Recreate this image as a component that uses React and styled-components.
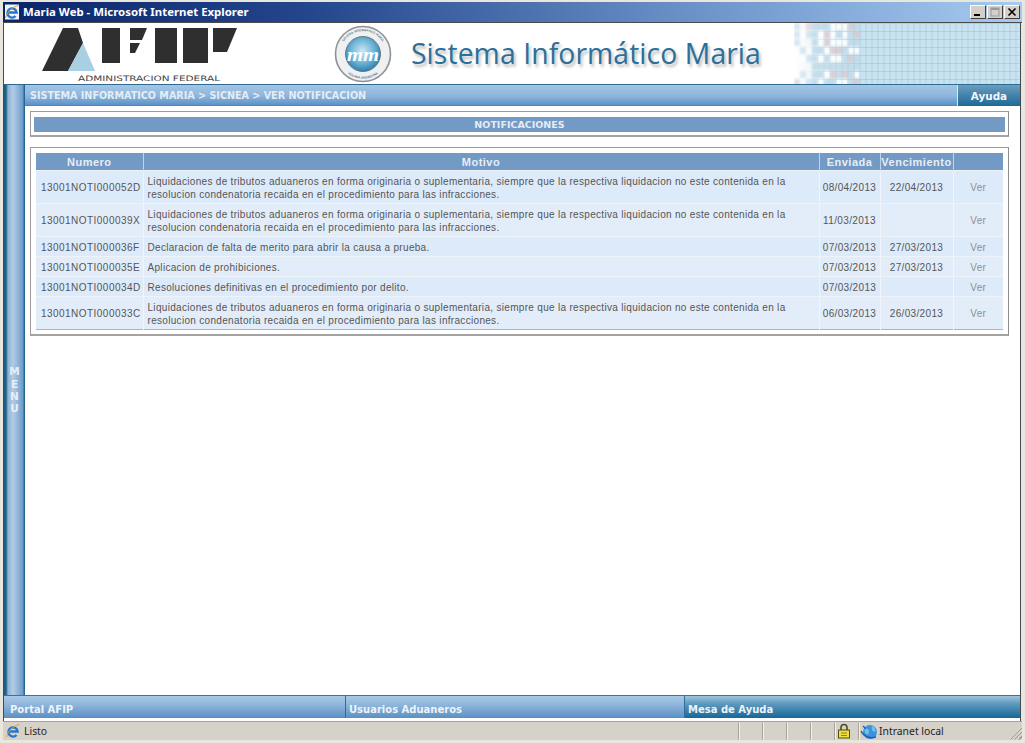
import React from "react";
import styled, { createGlobalStyle } from "styled-components";

const Global = createGlobalStyle`
  html, body { margin: 0; padding: 0; background: #fff; }
  * { box-sizing: border-box; }
`;

const Window = styled.div`
  width: 1025px; height: 743px; display: flex; flex-direction: column;
  background: #e9e6de; padding: 2px 3px 3px 3px; overflow: hidden;
  font-family: "Liberation Sans", Arial, sans-serif;
`;
const TitleBar = styled.div`
  height: 21px; flex: none; display: flex; align-items: center; padding: 0 2px 1px 1px;
  background: linear-gradient(90deg, #0a246a 0%, #24468c 30%, #6f97cc 70%, #a6caf0 100%);
  border-bottom: 1px solid #4a4a4a;
`;
const TitleText = styled.span`
  font: bold 11.4px "Noto Sans", sans-serif; color: #fff; margin-left: 3px; flex: 1; white-space: nowrap;
`;
const CaptionBtn = styled.button`
  width: 16px; height: 14px; padding: 0; margin-left: 1px; display: flex; align-items: center; justify-content: center;
  background: #d4d0c8; border: 1px solid; border-color: #fff #404040 #404040 #fff;
`;
const Page = styled.div`
  flex: 1; display: flex; flex-direction: column; min-height: 0; background: #fff;
  border-left: 1px solid #3f4a52; border-right: 1px solid #3f4a52; margin-right: 1px; padding-bottom: 3px;
`;
const Header = styled.div`
  height: 62px; flex: none; display: flex; align-items: stretch; background: #fff;
  border-bottom: 1px solid #2c6a92;
`;
const LogoSlot = styled.div`
  width: 322px; flex: none;
`;
const SealSlot = styled.div`
  width: 80px; flex: none; display: flex; align-items: center; justify-content: center; padding-right: 6px;
`;
const BrandTitle = styled.div`
  width: 388px; flex: none; padding-left: 5px; font: 28.3px/60px "Open Sans", sans-serif; color: #2b6f9b;
  text-shadow: 2px 3px 3px #bdbdbd; white-space: nowrap; letter-spacing: 0.1px;
`;
const Pattern = styled.div`
  flex: 1; overflow: hidden;
`;
const Body = styled.div`
  flex: 1; display: flex; min-height: 0;
`;
const MenuStrip = styled.div`
  width: 21px; flex: none; display: flex; flex-direction: column; align-items: center; justify-content: center;
  background: linear-gradient(90deg, #1d6086 0, #1d6086 2px, #8fb3d6 4px, #b4cce4 9px, #6d9ccb 19px, #2a6c96 20px, #1d6086 21px);
`;
const MenuLetter = styled.span`
  font: bold 10.5px/12.3px "DejaVu Sans", sans-serif; color: #e6eef7;
`;
const Main = styled.div`
  flex: 1; display: flex; flex-direction: column; min-width: 0; background: #fff;
`;
const NavBar = styled.div`
  height: 21px; flex: none; display: flex; align-items: stretch;
  background: linear-gradient(180deg, #a5c6e4 0, #8db5dc 11px, #5c92c6 20px, #3c7eaa 21px);
`;
const Crumbs = styled.div`
  flex: 1; padding-left: 5px; font: bold 9.6px/22px "DejaVu Sans", sans-serif; color: #e4edf6; white-space: nowrap;
`;
const AyudaLink = styled.div`
  width: 63px; flex: none; text-align: center; font: bold 10.4px/22px "DejaVu Sans", sans-serif; color: #f2f6fa;
  background: linear-gradient(180deg, #6b9dbf 0, #4d88ae 8px, #1c6a98 21px); border-left: 1px solid #dce6ef;
`;
const Content = styled.div`
  flex: 1; padding: 5px 11px 0 5px; display: flex; flex-direction: column; gap: 10px;
`;
const Panel = styled.div`
  border: 1px solid #9e9a96; border-right-color: #8d8d8d; border-bottom: 2px solid #a3a3a3;
  background: #fff;
`;
const TitlePanel = styled(Panel)`
  height: 26px; padding: 5px 3px 0 3px;
`;
const PanelTitle = styled.div`
  height: 15px; background: #7399c5; color: #e4ecf5; text-align: center;
  font: bold 9.5px/15px "DejaVu Sans", sans-serif;
`;
const TablePanel = styled(Panel)`
  padding: 5px 5px 4px 5px;
`;
const Table = styled.table`
  width: 967px; table-layout: fixed; border-collapse: collapse;
  font-family: "Liberation Sans", Arial, sans-serif; border-bottom: 1px solid #a8b4c0;
`;
const Col = styled.col`
  width: ${p => p.$w}px;
`;
const Th = styled.th`
  height: 17px; padding: 1px 0 0; background: #7399c5; color: #e6eef6; font-size: 11px; font-weight: bold; letter-spacing: 0.5px;
  text-align: center; border-left: 1px solid #c2d4e8;
  &:first-child { border-left: 0; }
`;
const Row = styled.tr`
  height: ${p => p.$h}px;
  background: ${p => (p.$alt ? "#e3edf9" : "#ddeafa")};
  border-top: 1px solid #eef3fa;
`;
const Td = styled.td`
  padding: 2px 0 0 ${p => p.$pad ?? 4}px; color: #555; font-size: 10px; line-height: 13px;
  letter-spacing: ${p => p.$track ?? 0.31}px;
  text-align: ${p => p.$align || "left"}; border-left: 1px solid #f1f5fb; white-space: nowrap;
  &:first-child { border-left: 0; }
`;
const VerLink = styled.span`
  color: #8f8f8f;
`;
const Footer = styled.div`
  height: 23px; flex: none; display: flex;
  border-top: 1px solid #3b7297;
`;
const FootCell = styled.div`
  flex: ${p => p.$w ? `0 0 ${p.$w}px` : 1}; padding-left: ${p => (p.$first ? 6 : 3)}px;
  font: bold 10px/27px "DejaVu Sans", sans-serif; color: #eef3f8;
  background: ${p => p.$dark
    ? "linear-gradient(180deg, #9fc5dc 0, #5d98bd 8px, #15689a 22px)"
    : "linear-gradient(180deg, #a8c9e6 0, #8ab2da 10px, #5a90c4 22px)"};
  border-left: ${p => (p.$first ? "0" : "1px solid #2f6e97")};
`;
const StatusBar = styled.div`
  height: 19px; flex: none; display: flex; align-items: center;
  background: #d6d2c9; border-top: 1px solid #a5a199; font: 10.4px "Noto Sans", sans-serif; color: #222;
`;
const StatusIcon = styled.div`
  width: 18px; height: 18px; flex: none; margin-left: 1px; display: flex; align-items: center; justify-content: center;
`;
const StatusText = styled.span`
  flex: 1; padding-left: 2px;
`;
const StatusCell = styled.div`
  width: 24px; height: 17px; flex: none; border-left: 1px solid #a8a49c; box-shadow: inset 1px 0 0 #f4f2ec;
`;
const LockCell = styled(StatusCell)`
  display: flex; align-items: center; padding-left: 2px;
`;
const ZoneCell = styled(StatusCell)`
  width: 165px; display: flex; align-items: center; gap: 1px; padding-left: 1px; color: #222; white-space: nowrap;
`;
const Grip = styled.div`
  width: 12px; height: 12px; flex: none; margin-left: -13px; margin-top: 5px;
  background: repeating-linear-gradient(135deg, transparent 0, transparent 2px, #9c988f 2px, #9c988f 3px);
  clip-path: polygon(100% 0, 100% 100%, 0 100%);
`;

const ROWS = [
  ["13001NOTI000052D", true, "08/04/2013", "22/04/2013", 33],
  ["13001NOTI000039X", true, "11/03/2013", "", 33],
  ["13001NOTI000036F", "Declaracion de falta de merito para abrir la causa a prueba.", "07/03/2013", "27/03/2013", 20],
  ["13001NOTI000035E", "Aplicacion de prohibiciones.", "07/03/2013", "27/03/2013", 20],
  ["13001NOTI000034D", "Resoluciones definitivas en el procedimiento por delito.", "07/03/2013", "", 20],
  ["13001NOTI000033C", true, "06/03/2013", "26/03/2013", 33],
];
const LONG = [
  "Liquidaciones de tributos aduaneros en forma originaria o suplementaria, siempre que la respectiva liquidacion no este contenida en la",
  "resolucion condenatoria recaida en el procedimiento para las infracciones.",
];

const AfipLogo = () => (
  <svg width="322" height="61" viewBox="4 23 322 61" role="img" aria-label="AFIP">
    <g fill="#2f2f2f">
      <polygon points="42,71 63,28 78,28 83,43 68,71" />
      <rect x="102" y="28" width="18" height="35" />
      <polygon points="130,28 147,28 142,40 130,40" />
      <polygon points="130,43 140,43 135,53 130,53" />
      <rect x="155" y="28" width="22" height="35" />
      <rect x="183" y="28" width="25" height="35" />
      <polygon points="213,28 237,28 227,52 213,52" />
    </g>
    <polygon points="83,43 95,71 68,71" fill="#a9cfe2" />
    <text x="78" y="81" fontFamily="DejaVu Sans, sans-serif" fontSize="7.4" fill="#444" textLength="142" lengthAdjust="spacingAndGlyphs">ADMINISTRACION FEDERAL</text>
  </svg>
);

const Seal = () => (
  <svg width="58" height="58" viewBox="0 0 58 58" role="img" aria-label="Sello">
    <defs>
      <radialGradient id="sealBlue" cx="48%" cy="42%" r="62%">
        <stop offset="0" stopColor="#cfe8f4" />
        <stop offset="0.55" stopColor="#6db4d6" />
        <stop offset="1" stopColor="#2278a8" />
      </radialGradient>
      <path id="sealArc" d="M9.3 17.6 A22.7 22.7 0 0 1 48.7 17.6" />
      <path id="sealArcB" d="M12 47 A24.7 24.7 0 0 0 46 47" />
    </defs>
    <circle cx="29" cy="29" r="27.5" fill="#eef0f2" stroke="#8c9298" strokeWidth="1.6" />
    <circle cx="29" cy="29" r="17.5" fill="url(#sealBlue)" stroke="#5a6a76" strokeWidth="0.8" />
    <text fontSize="3" fontFamily="DejaVu Sans, sans-serif" fill="#25465c">
      <textPath href="#sealArc" startOffset="50%" textAnchor="middle">SISTEMA INFORMATICO MARIA</textPath>
    </text>
    <text fontSize="3" fontFamily="DejaVu Sans, sans-serif" fill="#25465c">
      <textPath href="#sealArcB" startOffset="50%" textAnchor="middle">ADUANA ARGENTINA</textPath>
    </text>
    <text x="13" y="36" textLength="32" lengthAdjust="spacingAndGlyphs" fontFamily="Liberation Serif, serif" fontStyle="italic" fontWeight="bold" fontSize="18" fill="#fff">mm</text>
  </svg>
);

const GridPattern = () => {
  const blotches = [];
  for (let y = 0; y < 8; y++) {
    for (let x = 0; x < 11; x++) {
      const hash = (x * 7 + y * 13 + x * y * 3) % 11;
      const tint = hash === 3 || hash === 8 ? "#dcc9cf" : hash % 2 ? "#fff" : "#bfdbe9";
      if (x < 3 && hash > 5) continue;
      blotches.push(<rect key={`${x}-${y}`} x={x * 6} y={y * 8} width="6" height="7" fill={tint} opacity={x < 3 ? 0.6 : 0.85} />);
    }
  }
  const lines = [];
  for (let x = 6; x <= 228; x += 6) lines.push(<path key={`v${x}`} d={`M${x} 0V61`} stroke="url(#lineFade)" strokeWidth="0.8" />);
  for (let y = 0; y <= 60; y += 8) lines.push(<path key={`h${y}`} d={`M0 ${y + 0.5}H228`} stroke="url(#lineFade)" strokeWidth="0.8" />);
  return (
    <svg width="228" height="61" viewBox="0 0 228 61" aria-hidden="true">
      <defs>
        <filter id="soft"><feGaussianBlur stdDeviation="1.1" /></filter>
        <linearGradient id="baseFade" x1="0" x2="1" y1="0" y2="0">
          <stop offset="0" stopColor="#c9e2ef" stopOpacity="0" />
          <stop offset="0.26" stopColor="#c9e2ef" />
        </linearGradient>
        <linearGradient id="lineFade" gradientUnits="userSpaceOnUse" x1="10" x2="70" y1="0" y2="0">
          <stop offset="0" stopColor="#a9cbdf" stopOpacity="0" />
          <stop offset="1" stopColor="#a9cbdf" />
        </linearGradient>
      </defs>
      <rect x="0" y="0" width="228" height="61" fill="url(#baseFade)" />
      <g filter="url(#soft)">{blotches}</g>
      {lines}
    </svg>
  );
};

const IeIcon = ({ size = 16, frame = true }) => (
  <svg width={size} height={size} viewBox="0 0 16 16" aria-hidden="true">
    {frame && <rect x="1" y="0.5" width="14" height="15" fill="#f1f3f6" />}
    <path d="M3.4 8.5h9.2A4.6 4.6 0 1 0 11.5 12" fill="none" stroke="#2577cc" strokeWidth="2.4" />
    <path d="M1.5 14 C3 7.5 9 2.5 14.5 1.5" fill="none" stroke="#e0a32a" strokeWidth="1" />
  </svg>
);

const Lock = () => (
  <svg width="14" height="16" viewBox="0 0 14 16" aria-hidden="true">
    <path d="M4 7V4.5a3 3 0 0 1 6 0V7" fill="none" stroke="#4e4e22" strokeWidth="1.6" />
    <rect x="1.5" y="7" width="11" height="8" fill="#f3e13a" stroke="#4e4e16" />
    <path d="M4 10h6M4 12.5h6" stroke="#8a8420" />
  </svg>
);

const Globe = () => (
  <svg width="18" height="17" viewBox="0 0 18 17" aria-hidden="true">
    <circle cx="10" cy="9" r="7" fill="#3f8fe0" />
    <path d="M5 5c3 0 4 2 4 4S7 12 6 11 4 7 5 5zM12 3c3 1 4 4 3 6-2 0-4-3-3-6z" fill="#6cc4e6" />
    <path d="M3 3l3 3M1 8c3 6 9 8 15 6" fill="none" stroke="#1f5fb0" strokeWidth="1.4" />
  </svg>
);

export default function App() {
  return (
    <>
      <Global />
      <Window>
        <TitleBar>
          <IeIcon />
          <TitleText>Maria Web - Microsoft Internet Explorer</TitleText>
          <CaptionBtn aria-label="Minimizar">
            <svg width="10" height="10" viewBox="0 0 10 10"><rect x="1" y="7" width="6" height="2" fill="#000" /></svg>
          </CaptionBtn>
          <CaptionBtn aria-label="Maximizar">
            <svg width="10" height="10" viewBox="0 0 10 10"><rect x="1" y="1" width="8" height="8" fill="none" stroke="#9a9a9a" /><rect x="1" y="1" width="8" height="2" fill="#9a9a9a" /></svg>
          </CaptionBtn>
          <CaptionBtn aria-label="Cerrar">
            <svg width="10" height="10" viewBox="0 0 10 10"><path d="M1.5 1.5l7 7M8.5 1.5l-7 7" stroke="#000" strokeWidth="1.6" /></svg>
          </CaptionBtn>
        </TitleBar>
        <Page>
          <Header>
            <LogoSlot><AfipLogo /></LogoSlot>
            <SealSlot><Seal /></SealSlot>
            <BrandTitle>Sistema Informático Maria</BrandTitle>
            <Pattern><GridPattern /></Pattern>
          </Header>
          <Body>
            <MenuStrip>
              {"MENU".split("").map(l => <MenuLetter key={l}>{l}</MenuLetter>)}
            </MenuStrip>
            <Main>
              <NavBar>
                <Crumbs>SISTEMA INFORMATICO MARIA &gt; SICNEA &gt; VER NOTIFICACION</Crumbs>
                <AyudaLink>Ayuda</AyudaLink>
              </NavBar>
              <Content>
                <TitlePanel>
                  <PanelTitle>NOTIFICACIONES</PanelTitle>
                </TitlePanel>
                <TablePanel>
                  <Table>
                    <colgroup>
                      <Col $w={107} /><Col $w={676} /><Col $w={61} /><Col $w={73} /><Col $w={50} />
                    </colgroup>
                    <thead>
                      <tr>
                        <Th>Numero</Th><Th>Motivo</Th><Th>Enviada</Th><Th>Vencimiento</Th><Th></Th>
                      </tr>
                    </thead>
                    <tbody>
                      {ROWS.map(([num, motivo, sent, due, h], i) => (
                        <Row key={num} $h={h} $alt={i % 2 === 1}>
                          <Td $pad={5} $track={0.46}>{num}</Td>
                          <Td>{motivo === true ? <>{LONG[0]}<br />{LONG[1]}</> : motivo}</Td>
                          <Td $align="center" $pad={0} $track={0.35}>{sent}</Td>
                          <Td $align="center" $pad={0} $track={0.35}>{due}</Td>
                          <Td $align="center" $pad={0} $track={0.4}><VerLink>Ver</VerLink></Td>
                        </Row>
                      ))}
                    </tbody>
                  </Table>
                </TablePanel>
              </Content>
            </Main>
          </Body>
          <Footer>
            <FootCell $w={341} $first>Portal AFIP</FootCell>
            <FootCell $w={339}>Usuarios Aduaneros</FootCell>
            <FootCell $dark>Mesa de Ayuda</FootCell>
          </Footer>
        </Page>
        <StatusBar>
          <StatusIcon><IeIcon frame={false} /></StatusIcon>
          <StatusText>Listo</StatusText>
          <StatusCell /><StatusCell /><StatusCell /><StatusCell />
          <LockCell><Lock /></LockCell>
          <ZoneCell><Globe />Intranet local</ZoneCell>
          <Grip />
        </StatusBar>
      </Window>
    </>
  );
}
